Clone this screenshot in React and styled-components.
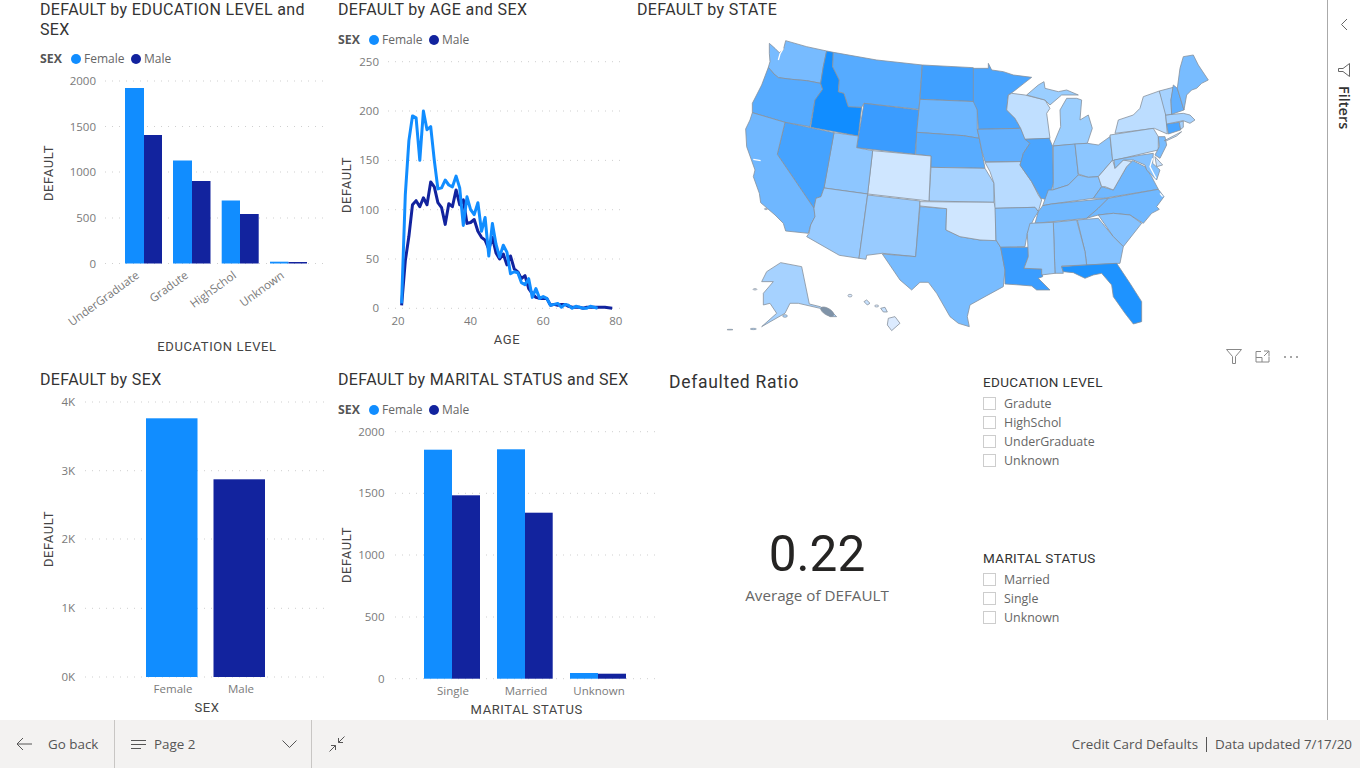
import React from 'react';
import styled, { createGlobalStyle } from 'styled-components';

const BLUE = '#118DFF';
const NAVY = '#12239E';
const TITLE_FONT = 'Roboto, "Liberation Sans", sans-serif';
const BODY_FONT = '"Open Sans", "Noto Sans", sans-serif';

const Global = createGlobalStyle`
  html, body { margin: 0; padding: 0; background: #fff; overflow: hidden; }
  #root { width: 1360px; height: 768px; }
`;

const Page = styled.div`
  width: 1360px; height: 768px; display: flex; flex-direction: column;
  font-family: ${BODY_FONT}; background: #fff;
`;
const Body = styled.div`display: flex; height: 720px;`;
const Canvas = styled.main`
  width: 1287px; padding-left: 40px; display: grid;
  grid-template-columns: 298px 299px 1fr; grid-template-rows: 370px 350px;
`;
const Visual = styled.section`display: flex; flex-direction: column; min-width: 0;`;
const Title = styled.h2`
  margin: 0; min-height: 20px; font: 400 16px/19.5px ${TITLE_FONT}; letter-spacing: 0.36px; color: #333;
  max-width: ${p => p.$max || 'none'}; white-space: ${p => p.$max ? 'normal' : 'nowrap'};
`;
const Legend = styled.div`
  display: flex; align-items: center; height: 19px; margin-top: 10px; color: #666; flex: none;
`;
const LegendName = styled.b`color: #555; font-weight: 700; margin-right: 7px; width: 24px; font-size: 12.3px;`;
const Dot = styled.i`width: 10px; height: 10px; border-radius: 50%; background: ${p => p.$c}; margin-right: 3px;`;
const LegendLabel = styled.span`width: ${p => p.$w}px; font-size: 12px;`;
const ChartSvg = styled.svg`display: block; overflow: visible; flex: none;`;
const Grid = styled.line`stroke: #cfcfcf; stroke-width: 1; stroke-dasharray: 1 6;`;
const Tick = styled.text`font: 11.5px ${BODY_FONT}; fill: #7a7a7a;`;
const AxisTitle = styled.text`font: 400 13px ${TITLE_FONT}; letter-spacing: 0.6px; fill: #444;`;
const Series = styled.polyline`fill: none; stroke-width: 3; stroke-linejoin: round; stroke: ${p => p.$c};`;
const State = styled.polygon`stroke: #87919c; stroke-width: 0.8; vector-effect: non-scaling-stroke; stroke-linejoin: round;`;
const Speck = styled.ellipse`stroke: #87919c; stroke-width: 0.7; vector-effect: non-scaling-stroke;`;
const Water = styled.polyline`fill: none; stroke: #fff; stroke-width: 1.3; vector-effect: non-scaling-stroke;`;

const LowerRight = styled.div`display: flex; position: relative;`;
const HeaderIcons = styled.div`
  position: absolute; top: -21px; left: 589px; display: flex; align-items: center; gap: 13px; color: #888;
`;
const Card = styled.section`width: 346px; padding-left: 32px; box-sizing: border-box; display: flex; flex-direction: column; align-items: flex-start;`;
const CardTitle = styled.h2`margin: 2px 0 0; font: 400 17.5px/20px ${TITLE_FONT}; letter-spacing: 0.7px; color: #333;`;
const KpiBox = styled.div`width: 296px; margin-top: 132px; text-align: center;`;
const KpiValue = styled.div`font: 400 49.5px/60px ${TITLE_FONT}; color: #252423;`;
const KpiLabel = styled.div`font-size: 15.2px; line-height: 20px; color: #666; margin-top: 1px;`;
const Slicers = styled.div`display: flex; flex-direction: column; padding-top: 3px;`;
const Slicer = styled.div`height: ${p => p.$h}px; display: flex; flex-direction: column;`;
const SlicerTitle = styled.div`font: 400 13.5px/18px ${TITLE_FONT}; letter-spacing: 0.35px; color: #333; margin-bottom: 3px;`;
const SlicerItem = styled.label`display: flex; align-items: center; height: 19px; font-size: 12.4px; color: #666;`;
const Box = styled.span`width: 11px; height: 11px; border: 1px solid #cdcdcd; margin-right: 8px;`;

const Rail = styled.aside`
  width: 32px; border-left: 1px solid #aaa; display: flex; flex-direction: column;
  align-items: center; padding-top: 18px; color: #666;
`;
const RailLabel = styled.div`
  writing-mode: vertical-rl; margin-top: 9px; font-size: 14.5px; font-weight: 600; color: #333; line-height: 16px;
`;
const RailGap = styled.div`height: 32px; flex: none;`;

const Footer = styled.footer`
  height: 48px; background: #f3f2f1; display: flex; align-items: center; font-size: 13.4px; color: #555;
`;
const BackButton = styled.div`
  width: 115px; height: 100%; display: flex; align-items: center; padding-left: 16px; gap: 16px;
  box-sizing: border-box; border-right: 1px solid #c8c6c4;
`;
const PageNav = styled.div`
  width: 197px; height: 100%; display: flex; align-items: center; padding: 0 14px 0 16px;
  box-sizing: border-box; border-right: 1px solid #c8c6c4;
`;
const PageName = styled.span`margin-left: 8px; flex: 1;`;
const Collapse = styled.div`padding-left: 17px; display: flex;`;
const FooterInfo = styled.div`margin-left: auto; padding-right: 8px; display: flex; align-items: center; gap: 8px;`;
const Bar = styled.span`width: 1px; height: 15px; background: #555;`;

const Stroke = ({ w, h, children, ...rest }) => (
  <svg width={w} height={h} viewBox={`0 0 ${w} ${h}`} fill="none" stroke="currentColor" strokeWidth="1" {...rest}>{children}</svg>
);

const LegendRow = () => (
  <Legend>
    <LegendName>SEX</LegendName><Dot $c={BLUE} /><LegendLabel $w={47}>Female</LegendLabel>
    <Dot $c={NAVY} /><LegendLabel $w={40}>Male</LegendLabel>
  </Legend>
);

const Rotated = ({ x, y, children }) => (
  <AxisTitle x={x} y={y} textAnchor="middle" transform={`rotate(-90 ${x} ${y})`}>{children}</AxisTitle>
);

const Grids = ({ x1, x2, ticks, tx }) => ticks.map(([label, y]) => (
  <g key={label}>
    <Grid x1={x1} x2={x2} y1={y} y2={y} />
    <Tick x={tx} y={y + 4} textAnchor="end">{label}</Tick>
  </g>
));

const Bars = ({ items }) => items.map(([x1, x2, top, c, base]) => (
  <rect key={x1} x={x1} y={top} width={x2 - x1} height={base - top} fill={c} />
));

const EducationChart = () => (
  <ChartSvg width="298" height="302" viewBox="40 68 298 302">
    <Grids x1={105} x2={328} tx={96} ticks={[['2000', 81], ['1500', 126.5], ['1000', 172], ['500', 218], ['0', 263.5]]} />
    <Bars items={[
      [125, 144, 88, BLUE, 263.5], [144, 162, 135, NAVY, 263.5],
      [173, 192, 160.5, BLUE, 263.5], [192, 210.5, 181, NAVY, 263.5],
      [221.7, 240, 200.5, BLUE, 263.5], [240, 258.7, 214, NAVY, 263.5],
      [270, 288.5, 261.7, BLUE, 263.5], [288.5, 307, 262, NAVY, 263.5],
    ]} />
    {[['UnderGraduate', 140, 277], ['Gradute', 189, 277], ['HighSchol', 237, 277], ['Unknown', 285, 277]].map(([t, x, y]) => (
      <Tick key={t} x={x} y={y} textAnchor="end" transform={`rotate(-36 ${x} ${y})`}>{t}</Tick>
    ))}
    <AxisTitle x={217} y={351} textAnchor="middle">EDUCATION LEVEL</AxisTitle>
    <Rotated x={53} y={173}>DEFAULT</Rotated>
  </ChartSvg>
);

const FEMALE = [5,115,170,195,193,150,200,181,184,150,121,122,130,125,123,134,122,84,113,100,95,107,78,92,53,86,65,52,64,57,35,37,36,26,24,30,11,20,10,12,10,3,4,5,1,4,3,0,2,1,0,0,2,1,0];
const MALE = [3,48,73,105,109,103,112,105,128,123,107,102,85,106,103,120,105,110,86,87,90,78,72,69,60,72,56,50,55,44,53,40,37,30,33,20,15,11,10,10,10,3,4,3,4,4,2,1,1,1,0,1,1,1,1,1,1,0.5,0];
const linePts = arr => arr.map((v, i) => `${(398 + (i + 1) * 3.63).toFixed(1)},${(308.3 - v * 0.9867).toFixed(1)}`).join(' ');

const AgeChart = () => (
  <ChartSvg width="299" height="321" viewBox="338 49 299 321">
    <Grids x1={388} x2={623} tx={379} ticks={[['250', 61.7], ['200', 111], ['150', 160.4], ['100', 209.7], ['50', 259], ['0', 308.3]]} />
    <Series $c={NAVY} points={linePts(MALE)} />
    <Series $c={BLUE} points={linePts(FEMALE)} />
    {[20, 40, 60, 80].map((a, i) => (
      <Tick key={a} x={398 + i * 72.6} y={324.5} textAnchor="middle">{a}</Tick>
    ))}
    <AxisTitle x={507} y={344} textAnchor="middle">AGE</AxisTitle>
    <Rotated x={351} y={185}>DEFAULT</Rotated>
  </ChartSvg>
);

const SexChart = () => (
  <ChartSvg width="298" height="330" viewBox="40 390 298 330">
    <Grids x1={85} x2={327} tx={75} ticks={[['4K', 402], ['3K', 470.7], ['2K', 539], ['1K', 608.3], ['0K', 677]]} />
    <Bars items={[[146, 197.5, 418.3, BLUE, 677], [213.5, 265, 479.3, NAVY, 677]]} />
    <Tick x={173} y={693} textAnchor="middle">Female</Tick>
    <Tick x={241} y={693} textAnchor="middle">Male</Tick>
    <AxisTitle x={207} y={712} textAnchor="middle">SEX</AxisTitle>
    <Rotated x={53} y={539}>DEFAULT</Rotated>
  </ChartSvg>
);

const MaritalChart = () => (
  <ChartSvg width="299" height="302" viewBox="338 418 299 302">
    <Grids x1={395} x2={655} tx={384.5} ticks={[['2000', 430.7], ['1500', 492.3], ['1000', 554], ['500', 616], ['0', 677.7]]} />
    <Bars items={[
      [424, 452, 448.7, BLUE, 677.7], [452, 480, 494.3, NAVY, 677.7],
      [497, 525, 448.3, BLUE, 677.7], [525, 552.7, 511.7, NAVY, 677.7],
      [570, 598, 672, BLUE, 677.7], [598, 626, 672.7, NAVY, 677.7],
    ]} />
    <Tick x={453} y={694} textAnchor="middle">Single</Tick>
    <Tick x={526} y={694} textAnchor="middle">Married</Tick>
    <Tick x={599} y={694} textAnchor="middle">Unknown</Tick>
    <AxisTitle x={526.7} y={713} textAnchor="middle">MARITAL STATUS</AxisTitle>
    <Rotated x={351} y={554}>DEFAULT</Rotated>
  </ChartSvg>
);

const WEST = [
  ['#77BBFF', '148,40 165,55 178,68 190,60 197,32 260,50 320,63 310,110 302,160 260,152 215,148 175,143 162,132 145,112 150,95 148,70'],
  ['#56ABFF', '145,112 162,132 175,143 215,148 260,152 302,160 308,178 285,210 270,290 195,277 97,248 97,220 125,165'],
  ['#118DFF', '320,63 340,67 338,110 358,150 355,185 372,190 385,230 425,232 415,318 272,292 285,210 308,178 302,160 310,110'],
  ['#56ABFF', '340,67 470,90 607,105 597,238 432,220 425,232 385,230 372,190 355,185 358,150 338,110'],
  ['#3A9CFF', '432,220 597,240 585,373 410,353'],
  ['#40A0FF', '607,105 760,113 772,215 600,208'],
  ['#6CB6FF', '600,208 772,215 772,300 778,325 730,317 590,307'],
  ['#58ACFF', '590,307 730,317 778,325 795,415 633,412 633,378 587,373'],
  ['#A6D2FF', '633,412 795,415 822,460 822,517 627,513'],
  ['#CFE6FF', '458,362 633,378 627,513 443,492'],
  ['#8DC6FF', '342,308 415,318 410,353 458,362 443,492 312,474'],
  ['#45A3FF', '195,277 342,308 312,474 303,500 288,505 282,535 172,373'],
  ['#6FB7FF', '97,248 195,277 172,373 282,535 285,560 272,585 265,610 197,603 190,580 165,555 122,518 118,490 100,440 105,420 80,350 77,297 90,270'],
  ['#98CBFF', '312,474 443,492 417,685 358,676 260,620 267,610 272,585 285,560 282,535 288,505 303,500'],
  ['#98CBFF', '443,495 600,513 587,680 487,670 440,676 438,688 417,685'],
  ['#78BCFF', '600,530 680,536 678,600 720,620 780,630 828,630 842,652 855,720 850,770 795,800 750,825 742,860 748,890 715,880 690,860 650,790 625,757 600,757 575,780 540,750 487,672 587,680'],
  ['#CFE6FF', '600,515 822,517 827,535 828,632 780,630 720,620 678,600 680,536 600,528'],
  ['#A6D2FF', '140,725 182,698 245,710 268,822 300,830 340,850 350,860 330,860 300,835 235,820 210,820 195,850 125,890 170,850 150,820 130,825 130,790 160,755 125,755'],
  ['#DCEBFF', '505,865 525,860 540,880 515,902 502,885'],
  ['#C8E2FF', '432,815 440,810 450,820 442,825'],
  ['#C8E2FF', '482,835 495,832 502,846 490,846'],
];
const EAST = [
  ['#4AA5FF', '10,115 55,115 55,100 65,120 100,125 130,135 185,142 130,185 115,195 110,240 135,265 152,295 25,298 22,240 10,215'],
  ['#62B0FF', '22,298 152,295 165,325 180,340 160,370 155,395 45,395 35,360 28,325'],
  ['#B8DBFF', '45,397 145,395 155,395 150,405 185,455 205,495 215,510 205,545 195,532 75,535 72,460 60,425'],
  ['#85C2FF', '75,535 195,532 205,545 192,565 172,610 165,650 92,652 78,630'],
  ['#3A9DFF', '92,652 175,652 175,680 162,715 215,717 218,740 205,745 240,780 200,780 185,768 150,765 105,762 105,720'],
  ['#C0DFFF', '125,190 165,195 225,210 240,235 230,250 240,325 165,328 152,295 135,265 110,240 115,195'],
  ['#4AA5FF', '165,328 238,325 248,350 250,460 235,510 213,505 185,455 150,405 160,370 180,340'],
  ['#9ACEFF', '170,195 205,165 222,155 225,175 265,185 290,180 325,195 275,195 240,225 225,210'],
  ['#9ACEFF', '290,205 320,205 335,210 330,270 355,255 367,295 352,340 248,348 272,290 270,240'],
  ['#7CBEFF', '250,348 315,342 325,435 295,465 248,480 250,460'],
  ['#8CC6FF', '315,342 352,340 385,345 420,320 428,390 385,440 355,442 325,432'],
  ['#85C2FF', '325,435 355,442 385,440 395,470 370,505 245,522 218,527 235,480 248,480 295,465'],
  ['#70B8FF', '218,527 245,522 415,505 385,535 350,565 195,580 205,545'],
  ['#70B8FF', '370,505 395,470 430,480 470,410 488,392 525,410 545,440 565,478 400,505'],
  ['#CFE6FF', '385,440 428,390 435,415 460,390 485,395 470,410 430,480 405,470 395,470'],
  ['#70B8FF', '415,505 565,478 582,500 560,530 568,538 545,550 520,580 480,555 430,550 385,555 350,565 385,535'],
  ['#85C2FF', '385,555 430,550 480,555 515,580 460,650 430,620'],
  ['#85C2FF', '322,570 385,565 430,620 460,650 450,700 350,705 345,665'],
  ['#85C2FF', '250,577 320,570 345,665 350,705 275,708 280,730 255,730'],
  ['#94CAFF', '180,580 250,577 255,730 215,735 215,717 162,715 175,680 172,610'],
  ['#1E93FF', '275,710 350,705 440,700 480,760 515,815 515,875 490,882 465,850 430,800 425,765 395,730 370,735 345,745 310,728 280,725'],
  ['#BCDDFF', '435,310 445,270 490,255 510,235 520,200 568,183 585,230 592,312 553,295'],
  ['#B0D8FF', '420,315 550,295 565,320 565,360 428,392'],
  ['#78BCFF', '565,320 585,320 590,345 570,385 555,375 568,350'],
  ['#85C2FF', '432,390 515,375 550,370 548,400 570,420 560,450 530,420 525,405 490,390 460,390 435,415'],
  ['#C8E2FF', '555,380 578,405 560,410'],
  ['#4AA5FF', '590,282 628,277 632,300 595,312'],
  ['#A6D2FF', '628,277 640,273 640,292 632,298'],
  ['#A6D2FF', '587,255 640,250 660,255 675,270 660,280 640,272 590,282'],
  ['#A6D2FF', '568,183 610,172 603,210 605,253 587,255'],
  ['#62B0FF', '610,165 622,175 642,240 605,253 603,210'],
  ['#78BCFF', '622,175 630,115 640,80 670,75 685,105 715,150 695,160 680,175 665,180 650,195 642,240'],
  ['#BCDDFF', '583,332 635,305 620,318 590,332'],
];
const USMap = () => (
  <ChartSvg width="690" height="350" viewBox="637 20 690 350">
    <g transform="translate(720 30) scale(0.3333)">
      {WEST.map(([f, p]) => <State key={p} fill={f} points={p} />)}
      <Water points="190,55 180,72 175,90" />
      <Water points="100,388 122,392" />
      <Speck cx="390" cy="797" rx="6" ry="4" fill="#DCEBFF" />
      <Speck cx="470" cy="828" rx="6" ry="3" fill="#DCEBFF" />
      <Speck cx="105" cy="778" rx="6" ry="2" fill="#DCEBFF" />
      <Speck cx="138" cy="537" rx="5" ry="2" fill="#DCEBFF" />
      <Speck cx="195" cy="858" rx="7" ry="4" fill="#A6D2FF" />
      <Speck cx="322" cy="845" rx="22" ry="10" fill="#7f93a8" transform="rotate(30 322 845)" />
      <Speck cx="100" cy="897" rx="9" ry="2" fill="#A6D2FF" />
      <Speck cx="30" cy="899" rx="9" ry="1" fill="#A6D2FF" />
    </g>
    <g transform="translate(970 30) scale(0.3333)">
      {EAST.map(([f, p]) => <State key={p} fill={f} points={p} />)}
      <Water points="548,385 540,410 558,445" />
      <Water points="570,490 578,500" />
    </g>
  </ChartSvg>
);

const Slice = ({ title, items, h }) => (
  <Slicer $h={h}>
    <SlicerTitle>{title}</SlicerTitle>
    {items.map(t => <SlicerItem key={t}><Box />{t}</SlicerItem>)}
  </Slicer>
);

export default function App() {
  return (
    <Page>
      <Global />
      <Body>
        <Canvas>
          <Visual>
            <Title $max="280px">DEFAULT by EDUCATION LEVEL and SEX</Title>
            <LegendRow />
            <EducationChart />
          </Visual>
          <Visual>
            <Title>DEFAULT by AGE and SEX</Title>
            <LegendRow />
            <AgeChart />
          </Visual>
          <Visual>
            <Title>DEFAULT by STATE</Title>
            <USMap />
          </Visual>
          <Visual>
            <Title>DEFAULT by SEX</Title>
            <SexChart />
          </Visual>
          <Visual>
            <Title>DEFAULT by MARITAL STATUS and SEX</Title>
            <LegendRow />
            <MaritalChart />
          </Visual>
          <LowerRight>
            <Card>
              <CardTitle>Defaulted Ratio</CardTitle>
              <KpiBox>
                <KpiValue>0.22</KpiValue>
                <KpiLabel>Average of DEFAULT</KpiLabel>
              </KpiBox>
            </Card>
            <Slicers>
              <Slice h={176} title="EDUCATION LEVEL" items={['Gradute', 'HighSchol', 'UnderGraduate', 'Unknown']} />
              <Slice h={100} title="MARITAL STATUS" items={['Married', 'Single', 'Unknown']} />
            </Slicers>
            <HeaderIcons>
              <Stroke w={16} h={15}><path d="M0.5 0.5H15.5L9.5 7.5V14.5H6.5V7.5Z" /></Stroke>
              <Stroke w={15} h={13}><path d="M6 1.5H1V12H14V6.5M1 7.5H7V12M9 1H14V6M14 1L9 6" /></Stroke>
              <Stroke w={16} h={4}><g fill="currentColor" stroke="none"><circle cx="2" cy="2" r="1" /><circle cx="8" cy="2" r="1" /><circle cx="14" cy="2" r="1" /></g></Stroke>
            </HeaderIcons>
          </LowerRight>
        </Canvas>
        <Rail>
          <Stroke w={8} h={13}><path d="M7 1L1.5 6.5L7 12" /></Stroke>
          <RailGap />
          <Stroke w={12} h={14}><path d="M11.5 0.5V13.5L5 8.5H0.5V5.5H5Z" /></Stroke>
          <RailLabel>Filters</RailLabel>
        </Rail>
      </Body>
      <Footer>
        <BackButton>
          <Stroke w={16} h={14}><path d="M7 1L1 7L7 13M1 7H16" /></Stroke>
          <span>Go back</span>
        </BackButton>
        <PageNav>
          <Stroke w={15} h={9}><path d="M0 0.5H15M0 4.5H15M0 8.5H10" /></Stroke>
          <PageName>Page 2</PageName>
          <Stroke w={15} h={8}><path d="M0.5 0.5L7.5 7.5L14.5 0.5" /></Stroke>
        </PageNav>
        <Collapse>
          <Stroke w={16} h={16}><path d="M0.5 15.5L6.5 9.5M2 9.5H6.5V14M15.5 0.5L9.5 6.5M14 6.5H9.5V2" /></Stroke>
        </Collapse>
        <FooterInfo>
          <span>Credit Card Defaults</span><Bar /><span>Data updated 7/17/20</span>
        </FooterInfo>
      </Footer>
    </Page>
  );
}
